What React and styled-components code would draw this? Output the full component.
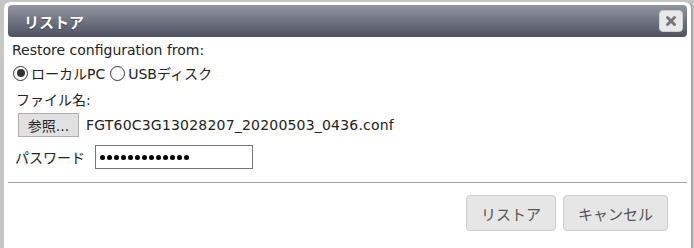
import React from "react";
import styled, { createGlobalStyle } from "styled-components";

const GlobalStyle = createGlobalStyle`
  html, body { margin: 0; padding: 0; background: #c6c6c6; }
  body {
    font-family: "DejaVu Sans", "Noto Sans CJK JP", sans-serif;
    font-size: 14px;
    color: #222;
  }
`;

const Page = styled.div`
  width: 694px;
  height: 248px;
  overflow: hidden;
  padding: 2px 3px 0 4px;
  box-sizing: border-box;
`;

const Dialog = styled.div`
  background: #fff;
  border-radius: 6px 6px 0 0;
  padding: 3px 4px 0 4px;
  height: 270px;
  box-shadow: 1px 0 0 #9a9a9a, 2px 0 0 #b4b4b4;
`;

const TitleBar = styled.div`
  height: 32px;
  border-radius: 4px;
  background: linear-gradient(#92969f, #4d5262);
  display: flex;
  align-items: center;
  justify-content: space-between;
  padding: 0 4px 0 16px;
`;

const Title = styled.div`
  color: #fff;
  font-weight: bold;
  font-size: 15px;
  text-shadow: 0 1px 1px rgba(0,0,0,0.4);
  font-family: "Noto Sans CJK JP", sans-serif;
`;

const CloseButton = styled.div`
  width: 22px;
  height: 20px;
  background: #e9e9e9;
  border: 1px solid #cfcfcf;
  border-radius: 4px;
  display: flex;
  align-items: center;
  justify-content: center;
`;

const Content = styled.div`
  padding: 0 0 0 4px;
`;

const Line = styled.div`
  line-height: 20px;
  height: 20px;
  margin-left: ${p => p.$indent || 0}px;
  margin-top: ${p => p.$top || 0}px;
`;

const RadioRow = styled.div`
  display: flex;
  align-items: center;
  margin-top: 2px;
  height: 22px;
`;

const RadioItem = styled.label`
  display: flex;
  align-items: center;
  gap: 3px;
  margin-right: 4px;
`;

const RadioCircle = styled.span`
  width: 13px;
  height: 13px;
  border: 1.5px solid #333;
  border-radius: 50%;
  display: flex;
  align-items: center;
  justify-content: center;
  margin-left: 1px;
  &::after {
    content: "";
    width: 8px;
    height: 8px;
    border-radius: 50%;
    background: ${p => (p.$checked ? "#333" : "transparent")};
  }
`;

const FileRow = styled.div`
  display: flex;
  align-items: center;
  gap: 7px;
  margin: 3px 0 0 6px;
`;

const BrowseButton = styled.div`
  width: 59px;
  height: 22px;
  box-sizing: content-box;
  background: #e1e1e1;
  border: 1px solid #adadad;
  display: flex;
  align-items: center;
  justify-content: center;
  font-size: 14px;
`;

const FileName = styled.span`
  letter-spacing: 0.2px;
`;

const PasswordRow = styled.div`
  display: flex;
  align-items: center;
  gap: 10px;
  margin: 8px 0 0 3px;
`;

const PasswordInput = styled.div`
  width: 158px;
  height: 24px;
  box-sizing: border-box;
  border: 1px solid #767676;
  display: flex;
  align-items: center;
  padding-left: 4px;
  gap: 2px;
`;

const Dot = styled.span`
  width: 5px;
  height: 5px;
  border-radius: 50%;
  background: #000;
`;

const Divider = styled.div`
  border-top: 1px solid #a4a4a4;
  margin-top: 13px;
`;

const Footer = styled.div`
  display: flex;
  justify-content: flex-end;
  gap: 7px;
  padding: 12px 19px 0 0;
`;

const ActionButton = styled.div`
  height: 34px;
  padding: 0 14px;
  background: #e6e6e6;
  border: 1px solid #cdcdcd;
  border-radius: 4px;
  color: #555;
  display: flex;
  align-items: center;
  justify-content: center;
  font-size: 15px;
  font-family: "Noto Sans CJK JP", sans-serif;
`;

export default function App() {
  return (
    <>
      <GlobalStyle />
      <Page>
        <Dialog>
          <TitleBar>
            <Title>リストア</Title>
            <CloseButton>
              <svg width="12" height="12" viewBox="0 0 12 12">
                <path d="M2.5 2.5 L9.5 9.5 M9.5 2.5 L2.5 9.5" stroke="#777" strokeWidth="3" strokeLinecap="round" />
              </svg>
            </CloseButton>
          </TitleBar>
          <Content>
            <Line $top={3}>Restore configuration from:</Line>
            <RadioRow>
              <RadioItem>
                <RadioCircle $checked />
                ローカルPC
              </RadioItem>
              <RadioItem>
                <RadioCircle />
                USBディスク
              </RadioItem>
            </RadioRow>
            <Line $indent={4} $top={6}>ファイル名:</Line>
            <FileRow>
              <BrowseButton>参照...</BrowseButton>
              <FileName>FGT60C3G13028207_20200503_0436.conf</FileName>
            </FileRow>
            <PasswordRow>
              <span>パスワード</span>
              <PasswordInput>
                {Array.from({ length: 13 }).map((_, i) => (
                  <Dot key={i} />
                ))}
              </PasswordInput>
            </PasswordRow>
          </Content>
          <Divider />
          <Footer>
            <ActionButton>リストア</ActionButton>
            <ActionButton>キャンセル</ActionButton>
          </Footer>
        </Dialog>
      </Page>
    </>
  );
}
